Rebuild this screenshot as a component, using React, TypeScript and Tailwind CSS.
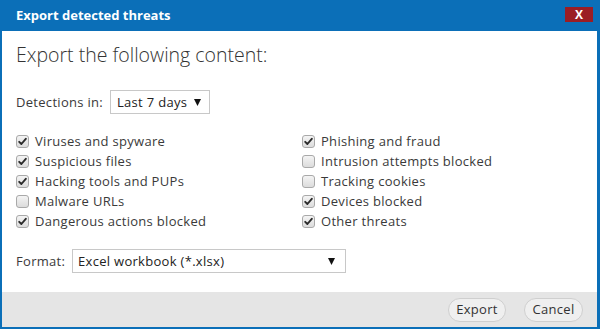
import { useState } from 'react'

const left = [
  { label: 'Viruses and spyware', on: true },
  { label: 'Suspicious files', on: true },
  { label: 'Hacking tools and PUPs', on: true },
  { label: 'Malware URLs', on: false },
  { label: 'Dangerous actions blocked', on: true },
]

const right = [
  { label: 'Phishing and fraud', on: true },
  { label: 'Intrusion attempts blocked', on: false },
  { label: 'Tracking cookies', on: false },
  { label: 'Devices blocked', on: true },
  { label: 'Other threats', on: true },
]

const Check = ({ label, initial }: { label: string; initial: boolean }) => {
  const [on, setOn] = useState(initial)
  return (
    <label className="flex items-center h-5 cursor-pointer" onClick={() => setOn(!on)}>
      <span className="w-[13px] h-[13px] rounded-[3px] border border-[#a9a9a9] bg-gradient-to-b from-[#f4f4f4] to-[#dcdcdc] flex items-center justify-center mr-[6px]">
        {on && (
          <svg width="9" height="9" viewBox="0 0 9 9">
            <path d="M1.2 4.8 L3.4 7 L7.8 1.8" stroke="#2b2b2b" strokeWidth="1.9" fill="none" strokeLinecap="round" strokeLinejoin="round" />
          </svg>
        )}
      </span>
      <span className="text-[13px] tracking-[0.3px] text-[#3a3a3a]">{label}</span>
    </label>
  )
}

const Arrow = () => (
  <svg width="7" height="7" viewBox="0 0 7 7">
    <path d="M0 0 L7 0 L3.5 7 Z" fill="#111" />
  </svg>
)

export default function App() {
  return (
    <div className="w-[600px] h-[329px] flex flex-col bg-[#0b6fb8] pl-[2px] pr-[3px] pb-[2px] font-['Open_Sans',Arial,sans-serif] leading-none">
      <div className="h-[31px] flex items-center justify-between pl-[14px] pr-[4px] shrink-0">
        <span className="text-white font-bold text-[13px]">Export detected threats</span>
        <button className="w-[28px] h-[15px] bg-[#9b1d24] flex items-center justify-center text-white font-bold text-[12px] leading-none mb-[2px]">
          X
        </button>
      </div>
      <div className="flex-1 bg-white flex flex-col">
        <div className="flex-1 pl-[14px] pt-[12px]">
          <h1 className="text-[19.5px] font-light text-[#333] leading-[24px]">Export the following content:</h1>
          <div className="flex items-center mt-[23px]">
            <span className="text-[13px] tracking-[0.3px] text-[#3a3a3a] w-[94px]">Detections in:</span>
            <div className="w-[100px] h-[24px] border border-[#c8c8c8] flex items-center justify-between pl-[6px] pr-[8px]">
              <span className="text-[13px] tracking-[0.3px] text-[#222]">Last 7 days</span>
              <Arrow />
            </div>
          </div>
          <div className="grid grid-cols-[286px_1fr] mt-[17px]">
            <div className="flex flex-col">
              {left.map(i => <Check key={i.label} label={i.label} initial={i.on} />)}
            </div>
            <div className="flex flex-col">
              {right.map(i => <Check key={i.label} label={i.label} initial={i.on} />)}
            </div>
          </div>
          <div className="flex items-center mt-[18px]">
            <span className="text-[13px] tracking-[0.3px] text-[#3a3a3a] w-[56px]">Format:</span>
            <div className="w-[274px] h-[24px] border border-[#c8c8c8] flex items-center justify-between pl-[5px] pr-[10px]">
              <span className="text-[13px] tracking-[0.3px] text-[#222]">Excel workbook (*.xlsx)</span>
              <Arrow />
            </div>
          </div>
        </div>
        <div className="h-[35px] bg-[#e5e5e5] flex items-center justify-end gap-[18px] pr-[14px] shrink-0">
          <button className="w-[58px] h-[24px] rounded-full border border-[#cfcfcf] bg-[#efefef] text-[13px] tracking-[0.3px] text-[#333]">Export</button>
          <button className="w-[59px] h-[24px] rounded-full border border-[#cfcfcf] bg-[#efefef] text-[13px] tracking-[0.3px] text-[#333]">Cancel</button>
        </div>
      </div>
    </div>
  )
}
